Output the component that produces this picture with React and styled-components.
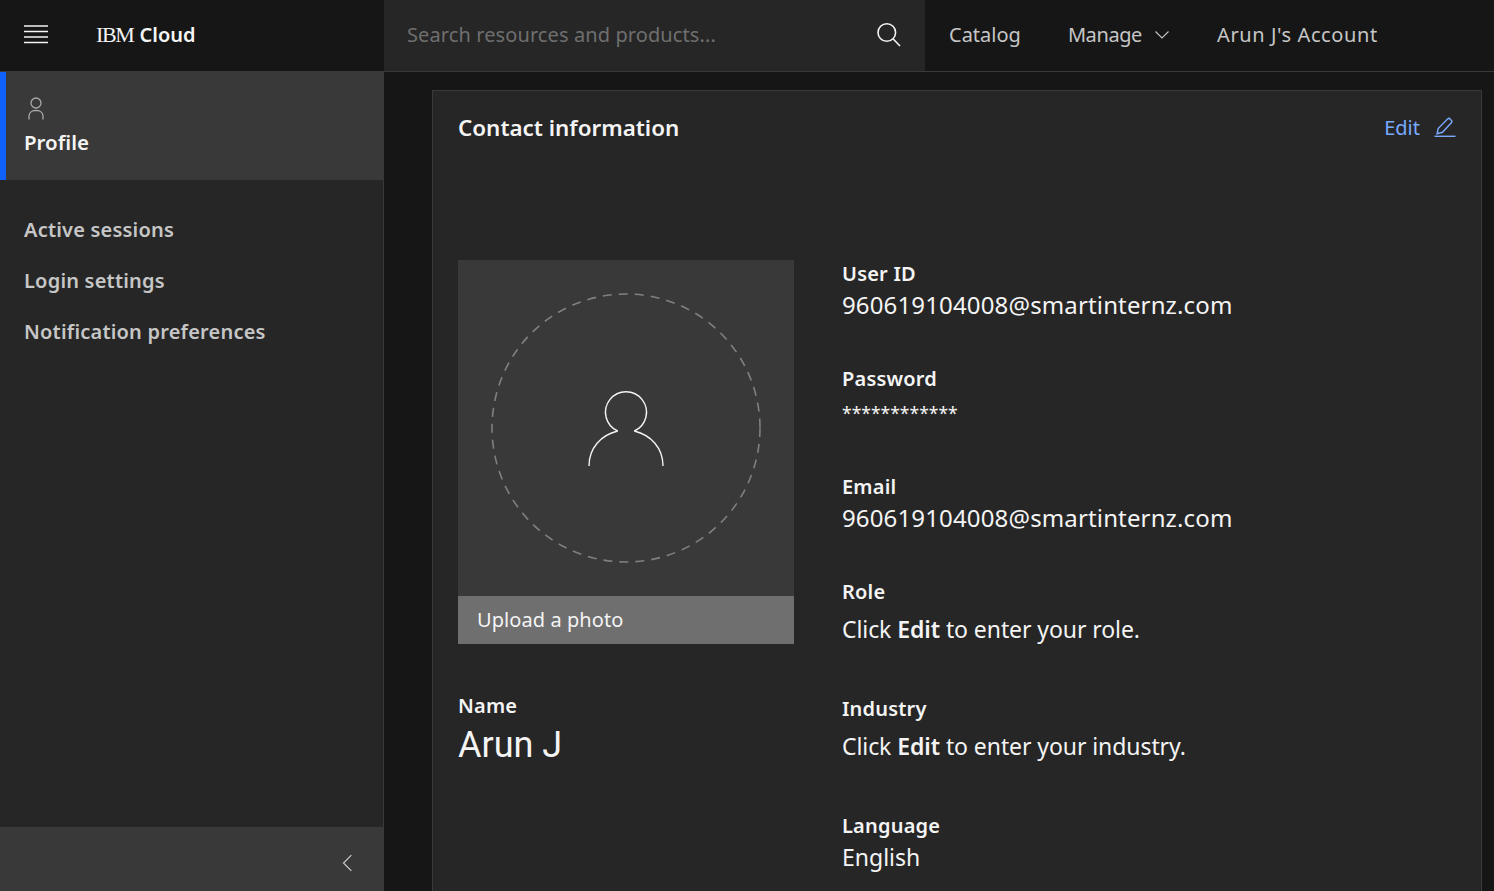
import styled, { createGlobalStyle } from "styled-components";

const GlobalStyle = createGlobalStyle`
  html, body {
    margin: 0;
    height: 100%;
    overflow: hidden;
    background: #161616;
    font-family: "Noto Sans", "Open Sans", sans-serif;
  }
`;

const Page = styled.div`
  width: 1494px;
  height: 891px;
  display: flex;
  flex-direction: column;
  overflow: hidden;
`;

const Header = styled.header`
  height: 71px;
  flex: none;
  display: flex;
  align-items: stretch;
  background: #161616;
  border-bottom: 1px solid #393939;
`;

const Brand = styled.div`
  width: 384px;
  flex: none;
  display: flex;
  align-items: center;
  padding: 0 0 2px 24px;
  box-sizing: border-box;
`;

const Logo = styled.span`
  margin-left: 48px;
  font-size: 22px;
  letter-spacing: -1.4px;
  color: #f4f4f4;
  font-family: "Liberation Serif", serif;
  b {
    margin-left: 2px;
    font-family: "Noto Sans", sans-serif;
    font-weight: 600;
    font-size: 20px;
    letter-spacing: 0;
  }
`;

const Search = styled.div`
  width: 541px;
  flex: none;
  display: flex;
  align-items: center;
  justify-content: space-between;
  box-sizing: border-box;
  padding: 0 24px 2px 23px;
  background: #262626;
  font-size: 20px;
  letter-spacing: 0.1px;
  color: #6f6f6f;
`;

const Nav = styled.nav`
  display: flex;
  align-items: center;
  gap: 47px;
  padding: 0 0 2px 24px;
`;

const NavItem = styled.span`
  display: flex;
  align-items: center;
  gap: 13px;
  margin-left: ${(p) => p.$shift || 0}px;
  font-size: 20px;
  color: #c6c6c6;
`;

const NavLabel = styled.span`
  letter-spacing: ${(p) => p.$spacing || 0}px;
`;

const Body = styled.div`
  flex: 1;
  display: flex;
  min-height: 0;
`;

const Sidebar = styled.aside`
  width: 384px;
  flex: none;
  box-sizing: border-box;
  display: flex;
  flex-direction: column;
  background: #262626;
  border-right: 1px solid #393939;
`;

const ProfileTab = styled.div`
  height: 108px;
  box-sizing: border-box;
  display: flex;
  flex-direction: column;
  align-items: flex-start;
  padding: 25px 0 0 18px;
  background: #393939;
  border-left: 6px solid #0f62fe;
  color: #f4f4f4;
  font-size: 20.5px;
  font-weight: 600;
  line-height: 26px;
  svg {
    margin: 0 0 8px 3px;
  }
`;

const SideLinks = styled.div`
  flex: 1;
  display: flex;
  flex-direction: column;
  padding: 24px 0 0 24px;
`;

const SideLink = styled.a`
  height: 51px;
  display: flex;
  align-items: center;
  font-size: 20px;
  font-weight: 600;
  letter-spacing: 0.2px;
  color: #c6c6c6;
`;

const Collapse = styled.div`
  height: 64px;
  flex: none;
  box-sizing: border-box;
  display: flex;
  align-items: center;
  justify-content: flex-end;
  padding: 8px 26px 0 0;
  background: #393939;
`;

const Main = styled.main`
  flex: 1;
  padding: 18px 12px 0 48px;
  min-width: 0;
`;

const Card = styled.section`
  height: 860px;
  box-sizing: border-box;
  background: #262626;
  border: 1px solid #393939;
  padding: 0 25px;
`;

const CardHead = styled.div`
  height: 169px;
  padding-top: 22px;
  box-sizing: border-box;
  display: flex;
  justify-content: space-between;
  align-items: flex-start;
`;

const CardTitle = styled.h2`
  margin: 0;
  font-size: 22.4px;
  line-height: 30px;
  font-weight: 600;
  color: #f4f4f4;
`;

const EditLink = styled.a`
  display: flex;
  align-items: center;
  gap: 14px;
  font-size: 20px;
  line-height: 30px;
  color: #78a9ff;
`;

const Columns = styled.div`
  display: flex;
  gap: 48px;
`;

const LeftCol = styled.div`
  width: 336px;
  flex: none;
`;

const PhotoBox = styled.div`
  height: 384px;
  display: flex;
  flex-direction: column;
  background: #393939;
`;

const PhotoArea = styled.div`
  flex: 1;
  display: flex;
  align-items: center;
  justify-content: center;
`;

const UploadBar = styled.div`
  height: 48px;
  box-sizing: border-box;
  display: flex;
  align-items: center;
  padding: 0 0 2px 19px;
  background: #6f6f6f;
  font-size: 20px;
  letter-spacing: 0.07px;
  color: #f4f4f4;
`;

const NameBlock = styled.div`
  margin-top: 48px;
`;

const RightCol = styled.div`
  display: flex;
  flex-direction: column;
`;

const Field = styled.div`
  height: ${(p) => p.$height}px;
  display: flex;
  flex-direction: column;
`;

const Label = styled.div`
  font-size: 20px;
  line-height: 27px;
  font-weight: 600;
  letter-spacing: 0.2px;
  color: #f4f4f4;
`;

const Value = styled.div`
  font-size: 23px;
  line-height: 36px;
  color: #f4f4f4;
`;

const EmailValue = styled(Value)`
  font-size: 24px;
  letter-spacing: 0.14px;
`;

const MaskValue = styled(Value)`
  font-size: 17.5px;
  margin-top: 3px;
`;

const HintValue = styled(Value)`
  margin-top: 6px;
  letter-spacing: -0.08px;
  b {
    font-weight: 600;
  }
`;

const NameValue = styled.div`
  margin-top: 4px;
  font-family: Roboto, sans-serif;
  font-size: 36px;
  line-height: 44px;
  color: #f4f4f4;
`;

const fields = [
  { label: "User ID", email: "960619104008@smartinternz.com", height: 105 },
  { label: "Password", mask: "************", height: 108 },
  { label: "Email", email: "960619104008@smartinternz.com", height: 105 },
  { label: "Role", hint: "role", height: 117 },
  { label: "Industry", hint: "industry", height: 117 },
  { label: "Language", value: "English", height: 100 },
];

const MenuIcon = () => (
  <svg width="24" height="20" viewBox="0 0 24 20" stroke="#f4f4f4" strokeWidth="1.6">
    <path d="M0 1h24M0 6.500h24M0 12h24M0 17.500h24" />
  </svg>
);

const SearchIcon = () => (
  <svg width="24" height="25" viewBox="0 0 24 25" fill="none" stroke="#f4f4f4" strokeWidth="1.6">
    <circle cx="9.800" cy="10.500" r="8.800" />
    <path d="M16.200 17l6.800 7" />
  </svg>
);

const Chevron = () => (
  <svg width="14" height="14" viewBox="0 0 14 14" fill="none" stroke="#c6c6c6" strokeWidth="1.1">
    <path d="M0.500 3.500l6.500 6.500 6.500-6.500" />
  </svg>
);

const BackChevron = () => (
  <svg width="18" height="18" viewBox="0 0 16 16" fill="none" stroke="#c6c6c6" strokeWidth="1.1">
    <path d="M11 1L4 8l7 7" />
  </svg>
);

const UserIcon = () => (
  <svg width="18" height="24" viewBox="0 0 18 24" fill="none" stroke="#a8a8a8" strokeWidth="1.3">
    <circle cx="9" cy="6" r="5" />
    <path d="M2 22.500v-4a6 6 0 0 1 6-5h2a6 6 0 0 1 6 5v4" />
  </svg>
);

const PencilIcon = () => (
  <svg width="22" height="22" viewBox="0 0 22 22" fill="none" stroke="#78a9ff" strokeWidth="1.4">
    <path d="M0.500 19.300h21" />
    <path d="M3 16.800l1.200-5.200L13.500 2l1.600-0.800 2.700 2.500 0 1.500L8.500 15.300z" />
  </svg>
);

const Avatar = () => (
  <svg width="272" height="272" viewBox="0 0 272 272" fill="none">
    <circle cx="136" cy="136" r="134" stroke="#808080" strokeWidth="1.6" strokeDasharray="9 7" />
    <g stroke="#f4f4f4" strokeWidth="1.4">
      <path d="M127.700 139A20.500 20.500 0 1 1 144.300 139" />
      <path d="M99 174C99 156 111 143 127.700 139M173 174C173 156 161 143 144.300 139" />
    </g>
  </svg>
);

export default function App() {
  return (
    <Page>
      <GlobalStyle />
      <Header>
        <Brand>
          <MenuIcon />
          <Logo>
            IBM <b>Cloud</b>
          </Logo>
        </Brand>
        <Search>
          <span>Search resources and products...</span>
          <SearchIcon />
        </Search>
        <Nav>
          <NavItem>Catalog</NavItem>
          <NavItem>
            <NavLabel $spacing={-0.4}>Manage</NavLabel>
            <Chevron />
          </NavItem>
          <NavItem $shift={1}>
            <NavLabel $spacing={0.6}>Arun J's Account</NavLabel>
          </NavItem>
        </Nav>
      </Header>
      <Body>
        <Sidebar>
          <ProfileTab>
            <UserIcon />
            Profile
          </ProfileTab>
          <SideLinks>
            <SideLink>Active sessions</SideLink>
            <SideLink>Login settings</SideLink>
            <SideLink>Notification preferences</SideLink>
          </SideLinks>
          <Collapse>
            <BackChevron />
          </Collapse>
        </Sidebar>
        <Main>
          <Card>
            <CardHead>
              <CardTitle>Contact information</CardTitle>
              <EditLink>
                Edit <PencilIcon />
              </EditLink>
            </CardHead>
            <Columns>
              <LeftCol>
                <PhotoBox>
                  <PhotoArea>
                    <Avatar />
                  </PhotoArea>
                  <UploadBar>Upload a photo</UploadBar>
                </PhotoBox>
                <NameBlock>
                  <Label>Name</Label>
                  <NameValue>Arun J</NameValue>
                </NameBlock>
              </LeftCol>
              <RightCol>
                {fields.map((f) => (
                  <Field key={f.label} $height={f.height}>
                    <Label>{f.label}</Label>
                    {f.email && <EmailValue>{f.email}</EmailValue>}
                    {f.mask && <MaskValue>{f.mask}</MaskValue>}
                    {f.value && <Value>{f.value}</Value>}
                    {f.hint && (
                      <HintValue>
                        Click <b>Edit</b> to enter your {f.hint}.
                      </HintValue>
                    )}
                  </Field>
                ))}
              </RightCol>
            </Columns>
          </Card>
        </Main>
      </Body>
    </Page>
  );
}
